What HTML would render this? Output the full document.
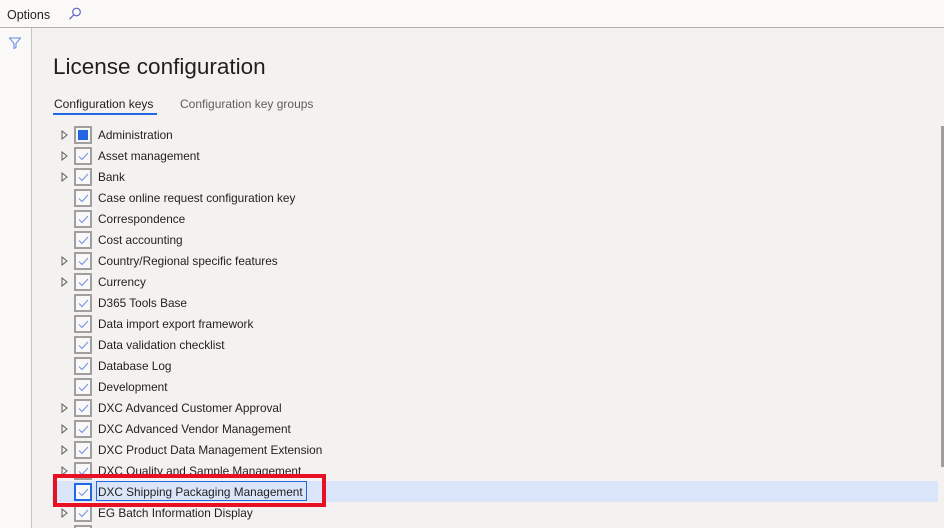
<!DOCTYPE html>
<html style="width:944px;height:528px;overflow:hidden"><head><style>
*{margin:0;padding:0;box-sizing:border-box}
body{width:944px;height:528px;overflow:hidden;background:#f3f2f1;font-family:"Liberation Sans",sans-serif;position:relative;color:#201f1e}
.top{position:absolute;left:0;top:0;width:944px;height:28px;background:#faf9f8;border-bottom:1px solid #b3b0ad}
.rail{position:absolute;left:0;top:28px;width:32px;height:500px;background:#faf9f8;border-right:1px solid #c8c6c4}
.row{position:absolute;left:52px;height:21px;width:886px;font-size:11.8px;line-height:21px}
.row .t{position:absolute;left:46px;top:1px}
.cb{position:absolute;left:22px;top:2px;width:18px;height:18px;border:2px solid #a19f9d;background:#f8f8f8}
.ar{position:absolute;left:9px;top:6px}
.sel{background:#dbe5f9}
</style></head><body>
<div class="top">
<div style="position:absolute;left:7px;top:8px;font-size:12.5px">Options</div>
<svg style="position:absolute;left:68px;top:7px" width="14" height="14" viewBox="0 0 14 14"><circle cx="8.5" cy="5" r="3.8" fill="none" stroke="#5b5fc7" stroke-width="1.1"/><path d="M5.8 7.8 L1.5 12.2" stroke="#5b5fc7" stroke-width="1.2"/></svg>
</div>
<div class="rail">
<svg style="position:absolute;left:9px;top:9px" width="12" height="12" viewBox="0 0 12 12"><path d="M0.5 1 H11.5 L7 6.5 V10.5 L5 11.5 V6.5 Z" fill="none" stroke="#5b8de0" stroke-width="1"/></svg>
</div>
<div style="position:absolute;left:53px;top:54px;font-size:22.5px;color:#201f1e">License configuration</div>
<div style="position:absolute;left:54px;top:97px;font-size:12px">Configuration keys</div>
<div style="position:absolute;left:53px;top:113px;width:104px;height:2px;background:#2266e3"></div>
<div style="position:absolute;left:180px;top:97px;font-size:12px;color:#605e5c">Configuration key groups</div>
<div style="position:absolute;left:941px;top:126px;width:3px;height:341px;background:#a19f9d"></div>
<div id="rows"></div>
<div style="position:absolute;left:53px;top:474px;width:273px;height:33px;border:4px solid #e81123"></div>
<script>
var items=[["Administration",1],["Asset management",1],["Bank",1],["Case online request configuration key",0],["Correspondence",0],["Cost accounting",0],["Country/Regional specific features",1],["Currency",1],["D365 Tools Base",0],["Data import export framework",0],["Data validation checklist",0],["Database Log",0],["Development",0],["DXC Advanced Customer Approval",1],["DXC Advanced Vendor Management",1],["DXC Product Data Management Extension",1],["DXC Quality and Sample Management",1],["DXC Shipping Packaging Management",0],["EG Batch Information Display",1],["",0]];
var h="";
items.forEach(function(it,i){
var top=124+21*i;var sel=i==17;
h+='<div class="row'+(sel?' sel':'')+'" style="top:'+top+'px">';
if(it[1])h+='<svg class="ar" width="7" height="10" viewBox="0 0 7 10"><path d="M1 1 L6 5 L1 9 Z" fill="none" stroke="#605e5c" stroke-width="1"/></svg>';
h+='<div class="cb" style="'+(sel?'border-color:#2266e3;':'')+'">';
if(i==0)h+='<div style="position:absolute;left:2px;top:2px;width:10px;height:10px;background:#2266e3"></div>';
else if(it[0])h+='<svg style="position:absolute;left:2px;top:3px" width="11" height="9" viewBox="0 0 11 9"><path d="M1 4.5 L4 7.5 L10 1" fill="none" stroke="#6f8fe0" stroke-width="1"/></svg>';
h+='</div>';
if(sel)h+='<div style="position:absolute;left:44px;top:0;width:211px;height:20px;border:1px solid #2266e3"></div>';
h+='<span class="t">'+it[0]+'</span></div>';
});
document.getElementById('rows').innerHTML=h;
</script>
</body></html>
